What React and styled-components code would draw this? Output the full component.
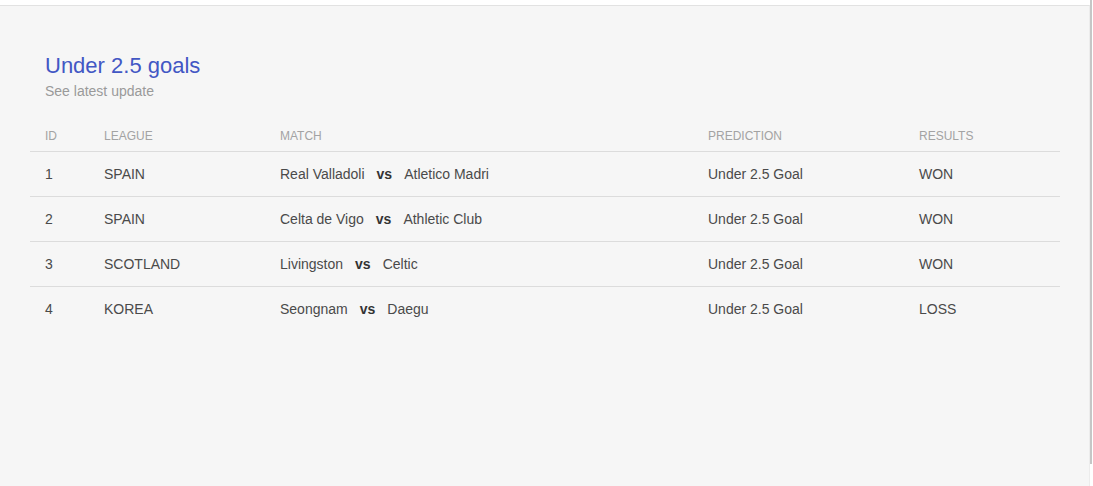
import React from "react";
import styled, { createGlobalStyle } from "styled-components";

const Global = createGlobalStyle`
  html, body { margin: 0; padding: 0; background: #ffffff; }
  body { font-family: "Liberation Sans", Arial, sans-serif; }
  * { box-sizing: border-box; }
`;

const Page = styled.div`
  display: flex;
  align-items: flex-start;
  height: 486px;
  overflow: hidden;
`;

const Panel = styled.section`
  width: 1090px;
  height: 481px;
  margin-top: 5px;
  background: #f6f6f6;
  border-top: 1px solid #e2e2e2;
  border-right: 1px solid #ececec;
  padding: 46px 30px 0 30px;
`;

const ScrollEdge = styled.div`
  width: 2px;
  height: 464px;
  background: #c6c6c6;
`;

const Header = styled.header`
  padding: 0 15px;
  margin-bottom: 23px;
`;

const Title = styled.h2`
  margin: 0;
  font-size: 22px;
  font-weight: 400;
  line-height: 28px;
  color: #4257c4;
`;

const Subtitle = styled.p`
  margin: 3px 0 0;
  font-size: 14px;
  line-height: 16px;
  color: #9a9a9a;
`;

const Table = styled.table`
  width: 1030px;
  border-collapse: collapse;
  table-layout: fixed;
`;

const Th = styled.th`
  width: ${(p) => p.$w}px;
  text-align: left;
  font-weight: 400;
  font-size: 12px;
  text-transform: uppercase;
  color: #a3a3a3;
  padding: 0 15px;
  height: 29px;
  vertical-align: middle;
  border-bottom: 1px solid #dcdcdc;
`;

const Tr = styled.tr`
  border-bottom: ${(p) => (p.$last ? "none" : "1px solid #dcdcdc")};
`;

const Td = styled.td`
  font-size: 14px;
  color: #4a4a4a;
  padding: 0 15px;
  height: 45px;
  vertical-align: middle;
  white-space: nowrap;
`;

const Vs = styled.b`
  font-weight: 700;
  color: #333;
  margin: 0 12px;
`;

const rows = [
  { id: 1, league: "SPAIN", home: "Real Valladoli", away: "Atletico Madri", pred: "Under 2.5 Goal", res: "WON" },
  { id: 2, league: "SPAIN", home: "Celta de Vigo", away: "Athletic Club", pred: "Under 2.5 Goal", res: "WON" },
  { id: 3, league: "SCOTLAND", home: "Livingston", away: "Celtic", pred: "Under 2.5 Goal", res: "WON" },
  { id: 4, league: "KOREA", home: "Seongnam", away: "Daegu", pred: "Under 2.5 Goal", res: "LOSS" },
];

export default function App() {
  return (
    <>
      <Global />
      <Page>
        <Panel>
          <Header>
            <Title>Under 2.5 goals</Title>
            <Subtitle>See latest update</Subtitle>
          </Header>
          <Table>
            <thead>
              <tr>
                <Th $w={59}>ID</Th>
                <Th $w={176}>League</Th>
                <Th $w={428}>Match</Th>
                <Th $w={211}>Prediction</Th>
                <Th $w={156}>Results</Th>
              </tr>
            </thead>
            <tbody>
              {rows.map((r, i) => (
                <Tr key={r.id} $last={i === rows.length - 1}>
                  <Td>{r.id}</Td>
                  <Td>{r.league}</Td>
                  <Td>
                    {r.home}
                    <Vs>vs</Vs>
                    {r.away}
                  </Td>
                  <Td>{r.pred}</Td>
                  <Td>{r.res}</Td>
                </Tr>
              ))}
            </tbody>
          </Table>
        </Panel>
        <ScrollEdge />
      </Page>
    </>
  );
}
